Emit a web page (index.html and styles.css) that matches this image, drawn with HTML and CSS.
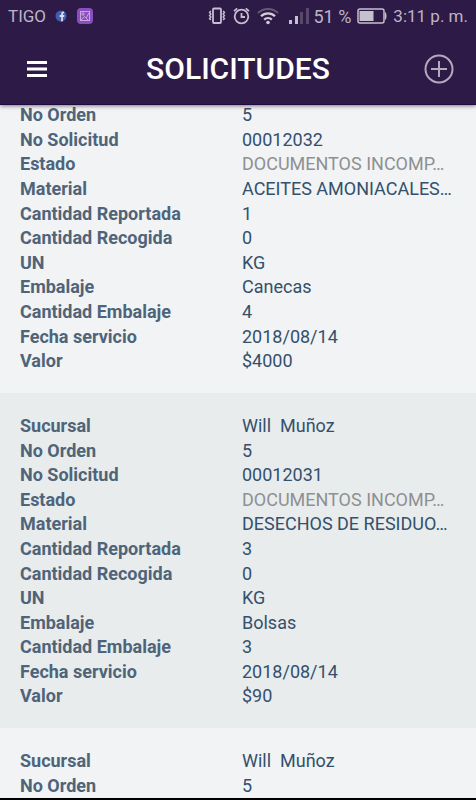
FILE: index.html
```html
<!DOCTYPE html>
<html lang="es">
<head>
    <meta charset="UTF-8">
    <meta name="viewport" content="width=device-width, initial-scale=1.0">
    <title>Solicitudes</title>
    <link rel="stylesheet" href="styles.css">
</head>
<body>
    <div class="app">
        <header class="header">
            <div class="status-bar">
                <span class="carrier">TIGO</span>
                <svg class="icon-facebook" width="12" height="12" viewBox="0 0 12 12">
                    <circle cx="6" cy="6" r="5.5" fill="#3f5fae"/>
                    <path d="M6.200 11.500V7H4.600V5.100h1.600V4c0-1.700.9-2.500 2.900-2.400v1.700c-.9 0-1.200.2-1.200.9v.9h1.500L9.200 7H7.900v4.300z" fill="#dcdcee"/>
                </svg>
                <svg class="icon-gallery" width="16" height="16" viewBox="0 0 16 16">
                    <rect width="16" height="16" rx="4" fill="#8a4fbe"/>
                    <g fill="none" stroke="#c9a6e2" stroke-width="1">
                        <rect x="3.500" y="3.500" width="9" height="9"/>
                        <circle cx="6" cy="6" r="1.200"/>
                        <path d="M4 12l3.500-3.500 1.500 1.500 3-5M9 10l2 2"/>
                    </g>
                </svg>
                <div class="status-right">
                    <svg width="18" height="18" viewBox="0 0 18 18" fill="none" stroke="#c6bfce">
                        <rect x="5" y="1.500" width="8" height="14.500" rx="1" stroke-width="1.800"/>
                        <path d="M2.800 4l-1.200 1.500L2.800 7 1.600 8.500 2.800 10l-1.200 1.500L2.800 13M15.200 4l1.200 1.500L15.200 7l1.200 1.500-1.200 1.500 1.200 1.500-1.200 1.500" stroke-width="1.500"/>
                    </svg>
                    <svg class="icon-alarm" width="17" height="18" viewBox="0 0 17 18" fill="none" stroke="#c6bfce" stroke-width="1.800">
                        <circle cx="8.500" cy="9.500" r="6.800"/>
                        <path d="M8.500 6v4H12M1 4.200L4.200 1.300M16 4.200L12.800 1.300"/>
                    </svg>
                    <svg class="icon-wifi" width="22" height="18" viewBox="0 0 22 18" fill="none" stroke-width="2">
                        <path d="M1 6a14.500 14.500 0 0 1 20 0" stroke="#685875"/>
                        <path d="M4 9.300a10 10 0 0 1 14 0M7.200 12.600a5.500 5.500 0 0 1 7.600 0" stroke="#d2ccd8" stroke-width="2.300"/>
                        <circle cx="11" cy="15.500" r="1.800" fill="#d2ccd8"/>
                    </svg>
                    <svg class="icon-signal" width="20" height="18" viewBox="0 0 20 18">
                        <path d="M0 13h3v4H0zM6 9h3v8H6z" fill="#c6bfce"/>
                        <path d="M11 5h3v12h-3zM17 1h3v16h-3z" fill="#58486a"/>
                    </svg>
                    <span class="percent">51 %</span>
                    <svg class="icon-battery" width="30" height="16" viewBox="0 0 30 16">
                        <rect x="1" y="1" width="26" height="14" rx="2" fill="none" stroke="#c6bfce" stroke-width="1.500"/>
                        <path d="M2.500 3h14v10h-14z" fill="#c6bfce"/>
                        <path d="M28 4c2 1 2 7 0 8z" fill="#c6bfce"/>
                    </svg>
                    <span class="clock">3:11 p. m.</span>
                </div>
            </div>
            <div class="toolbar">
                <button class="icon-button" type="button" aria-label="Menú">
                    <svg width="20" height="18" viewBox="0 0 20 18">
                        <path d="M0 1h20v3H0zM0 7.500h20v3H0zM0 14h20v3H0z" fill="#fff"/>
                    </svg>
                </button>
                <h1 class="title">SOLICITUDES</h1>
                <button class="icon-button" type="button" aria-label="Agregar">
                    <svg width="30" height="30" viewBox="0 0 30 30" fill="none" stroke="#b5a9bf" stroke-width="2">
                        <circle cx="15" cy="15" r="13.500"/>
                        <path d="M15 7v16M7 15h16"/>
                    </svg>
                </button>
            </div>
        </header>

        <main class="list">
            <dl class="card card-first">
                <dt>No Orden</dt><dd>5</dd>
                <dt>No Solicitud</dt><dd>00012032</dd>
                <dt>Estado</dt><dd class="pending">DOCUMENTOS INCOMP…</dd>
                <dt>Material</dt><dd>ACEITES AMONIACALES…</dd>
                <dt>Cantidad Reportada</dt><dd>1</dd>
                <dt>Cantidad Recogida</dt><dd>0</dd>
                <dt>UN</dt><dd>KG</dd>
                <dt>Embalaje</dt><dd>Canecas</dd>
                <dt>Cantidad Embalaje</dt><dd>4</dd>
                <dt>Fecha servicio</dt><dd>2018/08/14</dd>
                <dt>Valor</dt><dd>$4000</dd>
            </dl>
            <dl class="card">
                <dt>Sucursal</dt><dd>Will  Muñoz</dd>
                <dt>No Orden</dt><dd>5</dd>
                <dt>No Solicitud</dt><dd>00012031</dd>
                <dt>Estado</dt><dd class="pending">DOCUMENTOS INCOMP…</dd>
                <dt>Material</dt><dd>DESECHOS DE RESIDUO…</dd>
                <dt>Cantidad Reportada</dt><dd>3</dd>
                <dt>Cantidad Recogida</dt><dd>0</dd>
                <dt>UN</dt><dd>KG</dd>
                <dt>Embalaje</dt><dd>Bolsas</dd>
                <dt>Cantidad Embalaje</dt><dd>3</dd>
                <dt>Fecha servicio</dt><dd>2018/08/14</dd>
                <dt>Valor</dt><dd>$90</dd>
            </dl>
            <dl class="card card-short">
                <dt>Sucursal</dt><dd>Will  Muñoz</dd>
                <dt>No Orden</dt><dd>5</dd>
            </dl>
        </main>
    </div>
</body>
</html>
```
FILE: styles.css
```css
* { box-sizing: border-box; }
body { margin: 0; font-family: Roboto, sans-serif; font-size: 18px; background: #f1f3f5; }
.app { display: flex; flex-direction: column; height: 100vh; overflow: hidden; border-bottom: 2px solid #000; }

/* header */
.header { flex: none; position: relative; z-index: 1; background: #2e1a46; box-shadow: inset 0 -1px #22083f, 0 1px 4px rgba(0, 0, 0, 0.5); }
.status-bar { display: flex; align-items: center; height: 32px; padding: 0 8px; color: #bdb5c6; white-space: nowrap; }
.status-bar svg { flex: none; }
.carrier { font-size: 17px; }
.icon-facebook { margin-left: 9px; }
.icon-gallery { margin-left: 10px; }
.status-right { display: flex; align-items: center; margin-left: auto; }
.icon-alarm { margin-left: 7px; }
.icon-wifi { margin-left: 7px; }
.icon-signal { margin-left: 10px; }
.percent { margin-left: 4px; }
.icon-battery { margin: 0 6px; }
.clock { font-size: 17px; }
.toolbar { display: flex; align-items: center; justify-content: space-between; height: 73px; padding: 0 15px; }
.icon-button { display: flex; align-items: center; justify-content: center; width: 44px; height: 44px; padding: 0; background: none; border: none; cursor: pointer; }
.title { margin: 0; font-size: 30px; font-weight: 500; line-height: 40px; color: #fff; }

/* list */
.list { flex: 1; min-height: 0; overflow: hidden; }
.card { display: grid; grid-template-columns: 1fr 1fr; grid-auto-rows: 1fr; column-gap: 8px; min-height: 335px; margin: 0; padding: 21px 20px 19px; line-height: 24px; color: #34506b; white-space: pre; }
.card:nth-child(even) { background: #e8eced; }
.card-first { min-height: 290px; margin-top: -2px; padding-top: 0; }
.card-short { grid-auto-rows: 25px; }
.card dt { font-weight: 700; color: #4f6479; }
.card dd { margin: 0; }
.card .pending { color: #8e9091; }
```
